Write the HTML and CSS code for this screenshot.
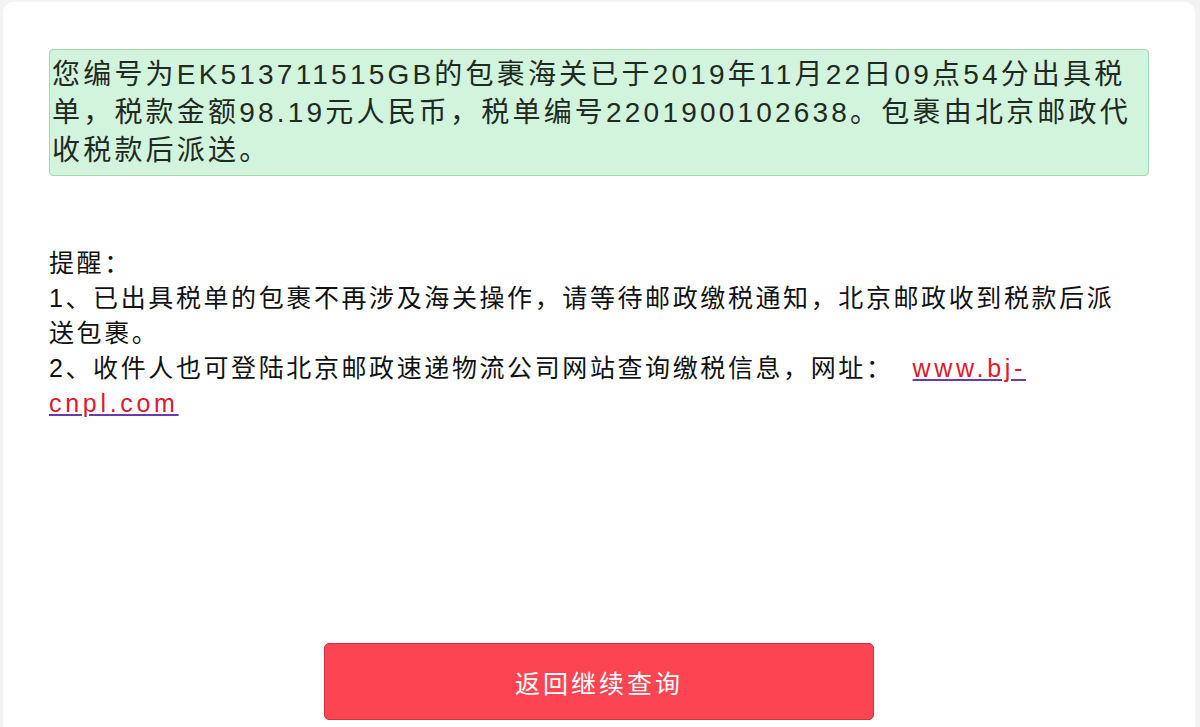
FILE: index.html
```html
<!DOCTYPE html>
<html lang="zh-CN">

<head>
    <meta charset="UTF-8">
    <meta name="viewport" content="width=device-width, initial-scale=1.0">
    <title>税单查询结果</title>

    <link rel="stylesheet" href="styles.css">
</head>

<body>
    <div class="card">
        <div class="result">您编号为EK513711515GB的包裹海关已于2019年11月22日09点54分出具税单，税款金额98.19元人民币，税单编号2201900102638。包裹由北京邮政代收税款后派送。</div>

        <div class="notice">
            <p>提醒：</p>
            <p>1、已出具税单的包裹不再涉及海关操作，请等待邮政缴税通知，北京邮政收到税款后派送包裹。</p>
            <p>2、收件人也可登陆北京邮政速递物流公司网站查询缴税信息，网址：&nbsp; <a href="#">www.bj-cnpl.com</a></p>
        </div>

        <div class="actions">
            <button type="button" class="btnBack">返回继续查询</button>
        </div>
    </div>
</body>

</html>
```

FILE: styles.css
```css
* {
    margin: 0;
    padding: 0;
    box-sizing: border-box;
}

body {
    background-color: #f3f3f3;
    font-family: "Liberation Sans", "Noto Sans CJK SC", sans-serif;
    padding: 2px 5px 0 3px;
}

.card {
    background-color: #fff;
    border-radius: 10px 10px 0 0;
    padding: 47px 46px 0 46px;
    height: 725px;
}

.result {
    background-color: #d3f4dc;
    border: 1px solid #a2d8ad;
    border-radius: 4px;
    padding: 6px 4px 5px 2px;
    font-size: 28px;
    line-height: 38px;
    letter-spacing: 3.2px;
    color: #1e2a22;
}

.notice {
    margin-top: 70px;
    padding-right: 20px;
    font-size: 25px;
    line-height: 35px;
    letter-spacing: 2.6px;
    color: #111;
}

.notice a {
    color: #e0182c;
    letter-spacing: 3.7px;
    text-decoration-color: #6a3aa8;
}

.actions {
    display: flex;
    justify-content: center;
    margin-top: 222px;
}

.btnBack {
    width: 550px;
    height: 77px;
    border: 1px solid #d8303e;
    border-radius: 5px;
    background-color: #fd4453;
    color: #fff;
    font-family: inherit;
    font-size: 25px;
    letter-spacing: 3px;
}
```
